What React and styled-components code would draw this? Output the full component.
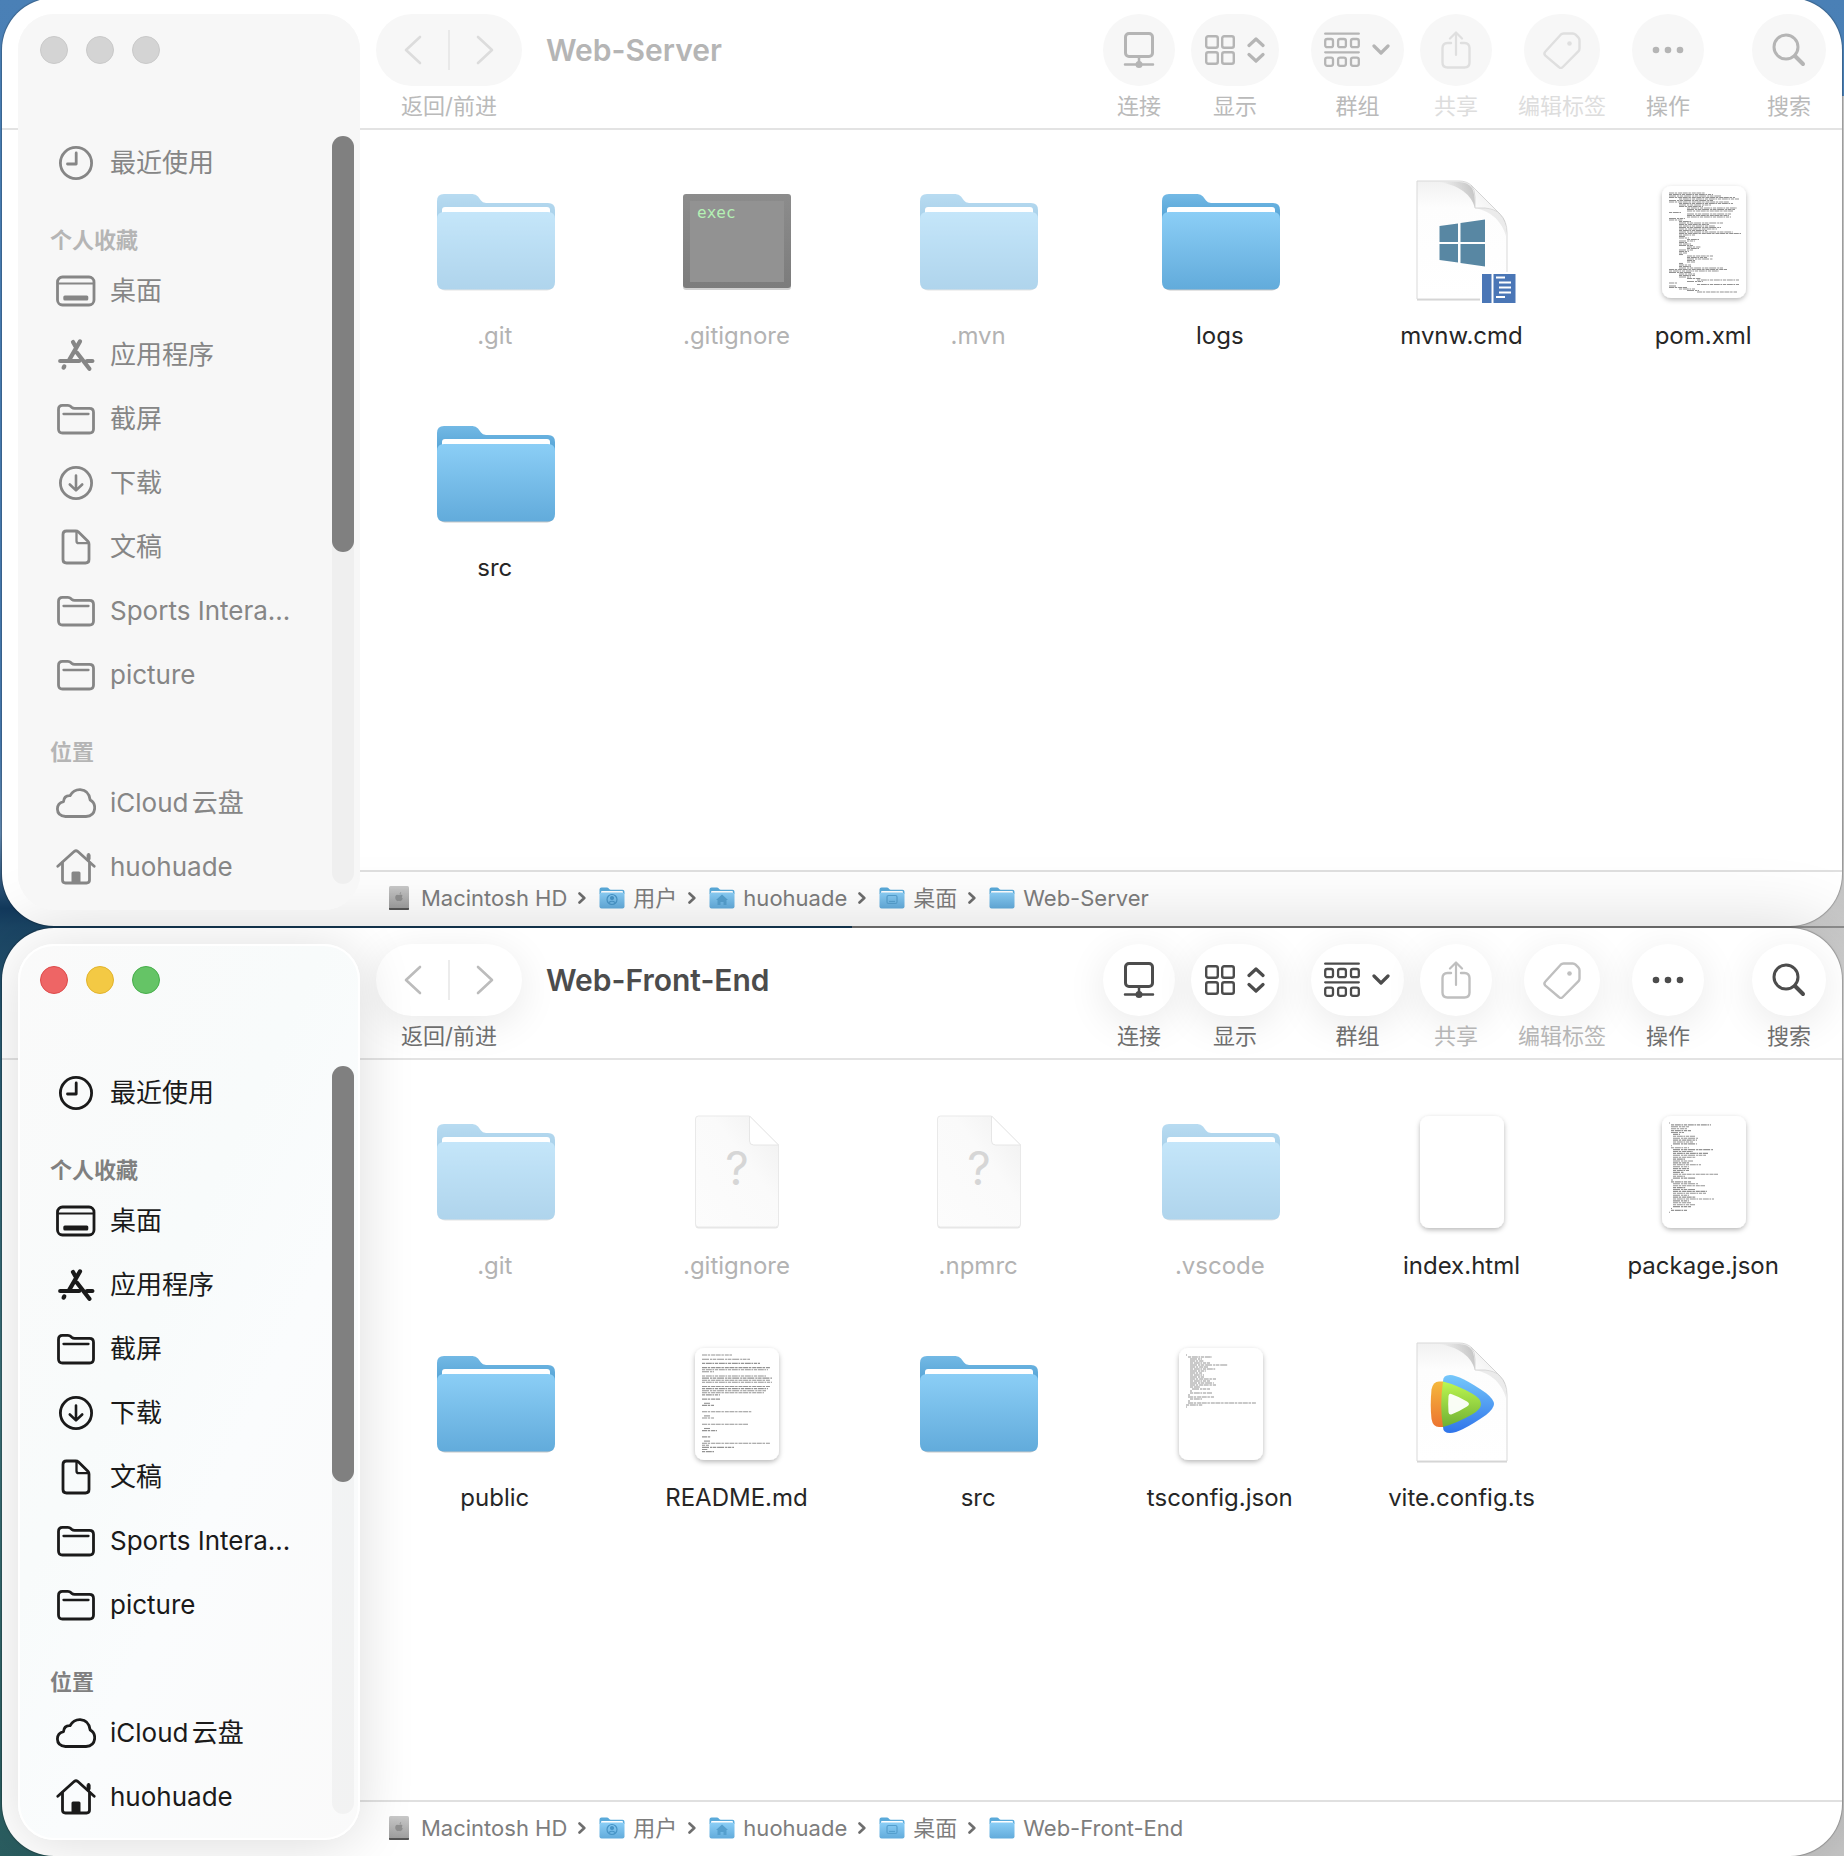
import React from "react";
import styled, { createGlobalStyle, ThemeProvider } from "styled-components";

const activeTheme = {
  title: "#4c4c4c",
  icon: "#4c4c4c",
  iconOff: "#bfbfbf",
  nav: "#bcbcbc",
  caption: "#6e6e6e",
  captionOff: "#b6b6b6",
  divider: "#ececec",
  pill: "#ffffff",
  pillShadow: "0 8px 40px rgba(0, 0, 0, 0.09)",
  side: "linear-gradient(115deg, #fafafa 0%, #f8fbfb 40%, #fafcfd 60%, #fafafa 100%)",
  sideEdge: "#ffffff",
  sideShadow: "0 4px 56px rgba(0, 0, 0, 0.14)",
  sideText: "#1a1a1a",
  section: "#808080",
  windowShadow: "0 0 76px rgba(0, 0, 0, 0.16)",
  lights: [
    ["#ee6565", "#dd4a4a"],
    ["#f3c944", "#e2b32c"],
    ["#65c466", "#46ae4a"],
  ],
};

const idleTheme = {
  title: "#b5b5b5",
  icon: "#b5b5b5",
  iconOff: "#dfdfdf",
  nav: "#dcdcdc",
  caption: "#bababa",
  captionOff: "#dddddd",
  divider: "#e9e9e9",
  pill: "#f7f7f7",
  pillShadow: "none",
  side: "#f7f7f7",
  sideEdge: "#f7f7f7",
  sideShadow: "0 0 0 rgba(0, 0, 0, 0)",
  sideText: "#868686",
  section: "#b5b5b5",
  windowShadow: "0 0 0 rgba(0, 0, 0, 0)",
  lights: [
    ["#d4d4d4", "#c9c9c9"],
    ["#d4d4d4", "#c9c9c9"],
    ["#d4d4d4", "#c9c9c9"],
  ],
};

const GlobalStyle = createGlobalStyle`
  *, *::before, *::after { box-sizing: border-box; }
  html, body { margin: 0; overflow: hidden; }
  body {
    font-family: Inter, "Noto Sans CJK SC", sans-serif;
    text-autospace: normal;
    background: #2a5a78;
  }
  button { font: inherit; color: inherit; background: none; border: 0; padding: 0; margin: 0; }
  a { color: inherit; text-decoration: none; }
  ul, ol { list-style: none; margin: 0; padding: 0; }
  svg { display: block; flex: none; }
`;

const Desktop = styled.div`
  min-height: calc(100vh + 2px);
  margin-top: -2px;
  padding: 0 2px;
  display: grid;
  grid-template-rows: 1fr 1fr;
  gap: 2px;
  background:
    linear-gradient(#8e8e8e, #8e8e8e) 852px 928px / 100% 2px no-repeat,
    linear-gradient(#c4c4c4 0, #bcbcbc 40%, #dedede 50%, #c0c0c0 60%, #c8c8c8) 100% 98px / 140px 100% no-repeat,
    linear-gradient(#4a80b6 0, #4577ab 40%, #5f86ad 45%, #12395c 49%, #1b4666 50%, #2c6078 56%, #40767e 75%, #2b5f62 100%);
`;

const WindowFrame = styled.section`
  display: grid;
  grid-template-columns: 358px minmax(0, 1fr);
  grid-template-rows: 132px minmax(0, 1fr) 56px;
  border-radius: 52px;
  overflow: hidden;
  background: #ffffff;
  box-shadow: 0 0 1px 1px rgba(0, 0, 0, 0.22), ${(p) => p.theme.windowShadow};
`;

const Toolbar = styled.header`
  grid-column: 1 / -1;
  grid-row: 1;
  padding: 16px 16px 0 374px;
  display: flex;
  align-items: flex-start;
  border-bottom: 2px solid #e3e3e3;
`;

const Column = styled.div`
  display: flex;
  flex-direction: column;
  align-items: center;
  gap: 6px;
`;

const NavPill = styled.div`
  display: flex;
  align-items: center;
  width: 146px;
  height: 72px;
  border-radius: 36px;
  color: ${(p) => p.theme.nav};
  background: ${(p) => p.theme.pill};
  box-shadow: ${(p) => p.theme.pillShadow};
`;

const NavButton = styled.button`
  flex: 1;
  height: 72px;
  display: grid;
  place-items: center;
`;

const NavDivider = styled.span`
  width: 2px;
  height: 40px;
  background: ${(p) => p.theme.divider};
`;

const Caption = styled.span`
  font-size: 22px;
  line-height: 28px;
  white-space: nowrap;
  color: ${(p) => (p.$off ? p.theme.captionOff : p.theme.caption)};
`;

const Title = styled.h1`
  flex: 1;
  min-width: 0;
  margin: 0 0 0 24px;
  font-size: 30px;
  line-height: 72px;
  font-weight: 600;
  white-space: nowrap;
  color: ${(p) => p.theme.title};
`;

const Tool = styled.button`
  display: flex;
  flex-direction: column;
  align-items: center;
  gap: 6px;
  margin-left: ${(p) => p.$before}px;
  color: ${(p) => (p.disabled ? p.theme.iconOff : p.theme.icon)};
`;

const Pill = styled.span`
  display: flex;
  align-items: center;
  justify-content: center;
  gap: 12px;
  width: ${(p) => p.$width}px;
  height: 72px;
  border-radius: 36px;
  background: ${(p) => p.theme.pill};
  box-shadow: ${(p) => p.theme.pillShadow};
`;

const Sidebar = styled.aside`
  grid-column: 1;
  grid-row: 1 / -1;
  z-index: 1;
  margin: 16px 0 16px 16px;
  border-radius: 36px;
  display: flex;
  flex-direction: column;
  background: ${(p) => p.theme.side};
  box-shadow: inset 0 0 0 2px ${(p) => p.theme.sideEdge}, ${(p) => p.theme.sideShadow};
`;

const Lights = styled.div`
  height: 117px;
  padding: 22px;
  display: flex;
  gap: 18px;
`;

const Light = styled.button`
  width: 28px;
  height: 28px;
  border-radius: 50%;
  background: ${(p) => p.$fill};
  border: 1px solid ${(p) => p.$edge};
`;

const SideBody = styled.div`
  flex: 1;
  min-height: 0;
  display: flex;
`;

const SideList = styled.nav`
  flex: 1;
  min-width: 0;
`;

const SectionName = styled.h2`
  margin: 0;
  padding: 31px 0 5px 32px;
  font-size: 22px;
  line-height: 28px;
  font-weight: 700;
  color: ${(p) => p.theme.section};
`;

const SideLink = styled.a`
  height: 64px;
  padding-left: 38px;
  display: flex;
  align-items: center;
  gap: 14px;
  font-size: 26px;
  line-height: 30px;
  white-space: nowrap;
  color: ${(p) => p.theme.sideText};
`;

const ScrollTrack = styled.div`
  width: 22px;
  margin: 5px 6px 26px 0;
  border-radius: 11px;
  background: rgba(0, 0, 0, 0.03);
`;

const ScrollThumb = styled.div`
  height: 416px;
  border-radius: 11px;
  background: #808080;
`;

const FileGrid = styled.main`
  grid-column: 2;
  grid-row: 2;
  padding: 47px 18px 0 14px;
  display: grid;
  grid-template-columns: repeat(6, minmax(0, 1fr));
  align-content: start;
  row-gap: 58px;
`;

const Tile = styled.button`
  display: flex;
  flex-direction: column;
  align-items: center;
  gap: 16px;
  font-size: 24px;
  line-height: 30px;
  color: ${(p) => (p.$dim ? "#b3b3b3" : "#262626")};
`;

const PathBar = styled.nav`
  grid-column: 2;
  grid-row: 3;
  border-top: 2px solid #e0e0e0;
  padding: 0 0 2px 27px;
  display: flex;
  align-items: center;
`;

const PathList = styled.ol`
  display: flex;
  align-items: center;
`;

const PathItem = styled.li`
  display: flex;
  align-items: center;
  color: #7d7d7d;
  font-size: 22px;
  line-height: 28px;
  white-space: nowrap;
`;

const PathLink = styled.a`
  display: flex;
  align-items: center;
  gap: 8px;
`;

const PathArrow = styled.svg`
  margin: 0 13px 0 11px;
`;

/* ---------- line icons ---------- */

const Line = ({ w = 40, h = 40, sw = 3, children }) => (
  <svg width={w} height={h} viewBox={`0 0 ${w} ${h}`} fill="none" stroke="currentColor"
    strokeWidth={sw} strokeLinecap="round" strokeLinejoin="round" aria-hidden="true">
    {children}
  </svg>
);

const sideIcons = {
  clock: (
    <Line sw={2.8}><circle cx="20" cy="20" r="15.6" /><path d="M20.2 10v11H11.5" /></Line>
  ),
  desktop: (
    <Line sw={2.8}>
      <rect x="1.5" y="6" width="36.5" height="28" rx="5" />
      <path d="M3 12.5h34" strokeWidth="2.2" />
      <rect x="7.3" y="24.5" width="25" height="5" rx="1.5" fill="currentColor" stroke="none" />
    </Line>
  ),
  apps: (
    <Line sw={4.2}>
      <path d="M17 7l2.8 5M24 6.4L13.4 24.6M21 17.8l12.4 16" />
      <path d="M4.200 26h19M31 26h5.400M7.600 32.600l.7-1.200" />
    </Line>
  ),
  folder: (
    <Line sw={2.8}>
      <path d="M2.500 10.500Q2.500 6.400 6.500 6.400h5.400q1.800 0 3 1.200l.8.7q1.200 1 3 1H33.500q4 0 4 4V30q0 4-4 4h-27q-4 0-4-4z" />
      <path d="M7.500 15h25" strokeWidth="2.3" />
    </Line>
  ),
  download: (
    <Line sw={2.8}>
      <circle cx="20" cy="20" r="15.6" />
      <path d="M20 12.500v14.500M13.800 21.500L20 27.400l6.200-5.900" strokeWidth="2.6" />
    </Line>
  ),
  doc: (
    <Line sw={2.8}>
      <path d="M10.500 4h9.200q1.600 0 2.800 1.100l9.400 9.100q1.100 1.100 1.100 2.700V32.500q0 3.500-3.500 3.500h-19Q7 36 7 32.500V7.500Q7 4 10.500 4z" />
      <path d="M20.500 4.500v9.500q0 2.200 2.200 2.200h9.800" strokeWidth="2.3" />
    </Line>
  ),
  cloud: (
    <Line sw={2.8}>
      <path d="M9.500 33.500Q1.500 33 1.400 26.100q.1-6 6.100-7.400Q8 12.500 14 12.700q3.600-6.300 10.200-6.100 8.800.6 10 10.400 4.600 2.400 4.500 8-.4 8-8.700 8.500z" />
    </Line>
  ),
  home: (
    <Line sw={2.8}>
      <path d="M1.800 19.200L18.400 4.300q1.600-1.200 3.200 0l16.600 14.900" />
      <path d="M6.500 16v17q0 3 3 3h21q3 0 3-3V16M32.600 13V7.500" />
      <path d="M32.600 7.500v5" strokeWidth="4" strokeLinecap="butt" />
      <path d="M15.500 35V26q0-1.500 1.500-1.500h6q1.500 0 1.500 1.500v9z" fill="currentColor" stroke="none" />
    </Line>
  ),
};

const toolIcons = {
  connect: (
    <Line w={32} h={36} sw={3}>
      <rect x="2.5" y="1.5" width="27" height="23" rx="3.5" />
      <path d="M16 25v6M2 32.500h28" strokeWidth="2.5" />
      <circle cx="16" cy="32.5" r="3.5" fill="currentColor" stroke="none" />
    </Line>
  ),
  view: (
    <>
      <Line w={30} h={32} sw={2.4}>
        <rect x="1.2" y="2.2" width="11.6" height="11.6" rx="2" />
        <rect x="17.2" y="2.2" width="11.6" height="11.6" rx="2" />
        <rect x="1.2" y="18.2" width="11.6" height="11.6" rx="2" />
        <rect x="17.2" y="18.2" width="11.6" height="11.6" rx="2" />
      </Line>
      <Line w={18} h={28} sw={3.2}><path d="M2 9.500L9 3l7 6.500M2 18.500L9 25l7-6.500" /></Line>
    </>
  ),
  group: (
    <>
      <Line w={36} h={36} sw={2.3}>
        <path d="M1.200 1.700h33.600M1.200 20.300h33.600" />
        <rect x="1.2" y="7" width="7.8" height="8.2" rx="2" />
        <rect x="14.1" y="7" width="7.8" height="8.2" rx="2" />
        <rect x="27" y="7" width="7.8" height="8.2" rx="2" />
        <rect x="1.2" y="25.6" width="7.8" height="8.2" rx="2" />
        <rect x="14.1" y="25.6" width="7.8" height="8.2" rx="2" />
        <rect x="27" y="25.6" width="7.8" height="8.2" rx="2" />
      </Line>
      <Line w={18} h={12} sw={3.2}><path d="M2 2l7 7 7-7" /></Line>
    </>
  ),
  share: (
    <Line w={30} h={38} sw={2.4}>
      <path d="M10 12H6.500Q1.500 12 1.500 17v14.500q0 5 5 5h17q5 0 5-5V17q0-5-5-5H20" />
      <path d="M15 24V1.800M9 7.500l6-6 6 6" strokeWidth="2.2" />
    </Line>
  ),
  tag: (
    <Line w={38} h={38} sw={2.4}>
      <path d="M20.500 2.500h9.200q1.700 0 2.900 1.200l2.700 2.700q1.200 1.200 1.200 2.900v8.200q0 1.700-1.200 2.900L19.800 36q-2 2-4 0L2.400 24.600q-2-2 0-4.100L17.700 3.700q1.200-1.200 2.800-1.200z" />
      <circle cx="26.5" cy="12.5" r="2.3" fill="currentColor" stroke="none" />
    </Line>
  ),
  more: (
    <svg width="32" height="8" viewBox="0 0 32 8" fill="currentColor" aria-hidden="true">
      <circle cx="4" cy="4" r="3.3" /><circle cx="16" cy="4" r="3.3" /><circle cx="28" cy="4" r="3.3" />
    </svg>
  ),
  search: (
    <Line w={34} h={34} sw={3}>
      <circle cx="14" cy="14" r="12" /><path d="M23 23l8 8" strokeWidth="4" />
    </Line>
  ),
};

/* ---------- file artwork ---------- */

const Art = ({ children, opacity }) => (
  <svg width="128" height="128" viewBox="0 0 128 128" opacity={opacity} aria-hidden="true">{children}</svg>
);

const Folder = ({ dim }) => (
  <Art opacity={dim ? 0.5 : 1}>
    <g transform="translate(6 17)">
      <rect x="1" y="60" width="116" height="36.5" rx="7" fill="#000" opacity=".22" />
      <path d="M0 20V7Q0 0 7 0h28.500q3.500 0 5.500 2.600l3 4Q45.500 9 49 9h62q7 0 7 7v14H0z" fill="url(#folderBack)" />
      <path d="M5 16q0-3 3-3h102q3 0 3 3v8H5z" fill="#fff" />
      <path d="M0 25q0-7 7-7h104q7 0 7 7v63q0 7.500-7 7.500H7q-7 0-7-7.500z" fill="url(#folderFront)" />
    </g>
  </Art>
);

const Exec = () => (
  <Art>
    <g transform="translate(11 17)">
      <rect x="0" y="3" width="108" height="93" rx="3" fill="#000" opacity=".18" />
      <rect width="108" height="94" rx="3" fill="url(#execEdge)" />
      <rect x="7" y="7" width="94" height="81" fill="#929292" />
      <text x="14" y="24" fontFamily="DejaVu Sans Mono, monospace" fontSize="16" fill="#b4f0b4">exec</text>
    </g>
  </Art>
);

const CurledPage = ({ children }) => (
  <Art>
    <g transform="translate(20 4)">
      <path d="M0 1H42Q50 1 55 6L83 34Q90 41 90 53V119.500H0z" fill="#000" opacity=".18" />
      <path d="M0 0H42Q50 0 55 5L83 33Q90 40 90 52V118H0z" fill="url(#pageFill)" stroke="#d9d9d9" />
      <path d="M22 1h20q9 0 13 6 3 5 3 20Q52 6 22 1z" fill="url(#curlShade)" />
      <path d="M58 27h10q10 1 17 8 5 6 4 20Q82 32 58 27z" fill="#000" opacity=".07" />
      <path d="M54 4q4 5 4 12v11h10q10 1 15 6z" fill="url(#curl)" stroke="#cfcfcf" strokeWidth=".8" />
      {children}
    </g>
  </Art>
);

const WindowsCmd = () => (
  <CurledPage>
    <path fill="#5887a3" d="M22.500 45L41 42.500V61H22.500zM43.500 42L68 38.500V61H43.500zM22.500 63H41v18.500L22.500 79zM43.500 63H68v22.500L43.500 82z" />
    <rect x="63" y="91" width="38" height="33" fill="#fff" />
    <path fill="#4a76b6" d="M65 93h9.500v29H65zM76.500 93h22v29h-22z" />
    <path stroke="#fff" strokeWidth="2.2" d="M79 96.500h9M82 101.500h12M82 106.500h12M82 111.500h12M79 116h9" />
  </CurledPage>
);

const VideoTs = () => (
  <CurledPage>
    <path d="M26 38q0-6 7-6 10 0 36 18 8 6.500 8 11t-8 11Q43 90 33 90q-7 0-7-6z" fill="url(#playBlue)" />
    <path d="M22 38.500h4V84h-4q-6 0-7.500-8-1.500-14 0-29.500 1.500-8 7.500-8z" fill="url(#playOrange)" />
    <path d="M26 38.500Q40 42 55 50.500q9 5 9 10.500t-9 10.500Q40 80 26 84q-3.500-22 0-45.500z" fill="url(#playGreen)" />
    <path d="M31.500 53q.4-3 3.400-1.800Q43 54 50 58.500q4 2.500 0 5Q43 68 34.900 71.200q-3 1-3.400-2-.6-8 0-16.200z" fill="#fff" opacity=".95" />
  </CurledPage>
);

const UnknownPage = () => (
  <Art>
    <g transform="translate(23.500 9)">
      <path d="M3 1.500h51l29 28V109q0 3.500-3 3.500H3q-3 0-3-3z" fill="#000" opacity=".1" />
      <path d="M3 0h51l29 29v79q0 3-3 3H3q-3 0-3-3V3Q0 0 3 0z" fill="url(#unknownFill)" stroke="#e9e9e9" />
      <path d="M54 0v25q0 4 4 4h25z" fill="#fff" stroke="#e6e6e6" />
      <text x="41.5" y="69" textAnchor="middle" fontFamily="Inter, sans-serif" fontSize="46" fontWeight="400" fill="#d6d6d6">?</text>
    </g>
  </Art>
);

/* Each entry is an indent and a length; a zero length leaves the row blank. */
const previews = {
  pom: [[0,36],[0,44],[0,52],[0,66],[10,60],[0,44],[0,60],[10,54],[10,32],[10,24],[18,50],[18,48],[18,46],[0,12],[18,44],[18,42],[18,44],[0,16],[0,14],[10,12],[10,44],[10,30],[10,36],[10,42],[10,38],[10,28],[10,54],[10,62],[10,16],[10,6],[10,10],[18,12],[10,16],[10,8],[10,12],[10,14],[18,14],[18,12],[10,14],[10,10],[10,8],[10,4],[18,26],[18,20],[18,26],[18,8],[18,8],[10,4],[10,12],[10,12],[10,44],[0,58],[0,50],[0,22],[10,16],[10,16],[10,12],[18,14],[28,42],[18,16],[0,8],[28,42],[0,8],[0,18],[10,16],[18,12],[28,40]],
  pkg: [[0,1],[2,40],[2,18],[2,16],[2,20],[2,13],[4,7],[4,22],[4,25],[4,24],[4,20],[4,24],[2,1],[2,18],[4,40],[4,20],[4,35],[4,33],[4,23],[4,12],[4,20],[4,16],[4,28],[4,16],[4,16],[4,16],[4,11],[4,45],[4,12],[4,23],[2,2],[2,20],[4,25],[4,32],[4,13],[4,22],[4,34],[4,33],[4,16],[4,23],[4,41],[4,16],[4,18],[4,22],[4,18],[2,1],[2,16],[0,1]],
  readme: [[0,30],[0,0],[0,48],[0,0],[0,58],[0,0],[0,68],[0,66],[0,12],[0,0],[0,64],[0,70],[0,68],[0,70],[0,0],[0,68],[0,66],[0,64],[0,62],[0,18],[0,0],[0,18],[0,0],[2,6],[0,12],[0,0],[0,0],[0,50],[0,0],[2,6],[0,12],[0,0],[0,0],[0,46],[0,0],[2,6],[0,15],[0,0],[0,0],[0,9],[0,0],[2,6],[0,68],[0,7],[0,32],[0,6],[0,12]],
  tsconfig: [[0,1],[2,24],[4,12],[4,14],[4,20],[4,38],[4,18],[4,26],[4,16],[4,12],[4,14],[4,14],[4,26],[4,20],[4,24],[4,26],[4,10],[6,18],[4,2],[4,22],[2,2],[2,26],[4,12],[2,2],[2,68],[0,17],[0,1]],
  blank: [],
};

const dashes = ["5 .7 2.5 .9 4 .6", "3 .8 6 .6 1.8 .8", "7 1 2.2 .6 3.5 .8"];

const PreviewPage = ({ rows, pitch }) => (
  <Art>
    <g transform="translate(23 9)">
      <rect width="84" height="112" rx="9" fill="#fff" filter="url(#pageShadow)" />
      {rows.map(([indent, length], i) =>
        length > 0 ? (
          <path key={i} d={`M${7 + indent} ${7 + i * pitch}h${length}`} stroke="#3c3c3c" strokeWidth="1.1"
            opacity=".55" strokeDasharray={dashes[i % 3]} />
        ) : null
      )}
    </g>
  </Art>
);

const art = {
  folder: <Folder />,
  folderDim: <Folder dim />,
  exec: <Exec />,
  cmd: <WindowsCmd />,
  video: <VideoTs />,
  unknown: <UnknownPage />,
  pom: <PreviewPage rows={previews.pom} pitch={1.5} />,
  pkg: <PreviewPage rows={previews.pkg} pitch={1.9} />,
  readme: <PreviewPage rows={previews.readme} pitch={2.1} />,
  tsconfig: <PreviewPage rows={previews.tsconfig} pitch={2} />,
  blank: <PreviewPage rows={previews.blank} pitch={2} />,
};

const Shade = ({ id, stops, diagonal }) => (
  <linearGradient id={id} x1="0" y1={diagonal ? "1" : "0"} x2={diagonal ? "1" : "0"} y2={diagonal ? "0" : "1"}>
    {stops.map(([offset, color]) => <stop key={offset} offset={offset} stopColor={color} />)}
  </linearGradient>
);

const DefsHolder = styled.svg`
  position: absolute;
`;

const ArtDefs = () => (
  <DefsHolder width="0" height="0" aria-hidden="true">
    <defs>
      <Shade id="folderBack" stops={[[0, "#73b9e5"], [1, "#4f9fd2"]]} />
      <Shade id="folderFront" stops={[[0, "#8bcef6"], [1, "#62abdb"]]} />
      <Shade id="execEdge" stops={[[0, "#8c8c8c"], [1, "#7c7c7c"]]} />
      <Shade id="pageFill" stops={[[0, "#f1f1f1"], [0.22, "#fdfdfd"], [1, "#ffffff"]]} />
      <Shade id="curl" diagonal stops={[[0, "#ffffff"], [0.5, "#f4f4f4"], [1, "#e2e2e2"]]} />
      <linearGradient id="curlShade" x1="0" y1="0" x2="1" y2="0">
        <stop offset="0" stopColor="#000" stopOpacity="0" />
        <stop offset="1" stopColor="#000" stopOpacity=".2" />
      </linearGradient>
      <Shade id="unknownFill" diagonal stops={[[0, "#fcfcfc"], [0.6, "#fafafa"], [1, "#efefef"]]} />
      <Shade id="playBlue" stops={[[0, "#76c8fb"], [1, "#2f74ea"]]} />
      <Shade id="playOrange" stops={[[0, "#f5b83c"], [1, "#ec7430"]]} />
      <Shade id="playGreen" stops={[[0, "#bdf751"], [1, "#6fb033"]]} />
      <Shade id="drive" stops={[[0, "#c9c9c9"], [1, "#9a9a9a"]]} />
      <filter id="pageShadow" x="-20%" y="-20%" width="140%" height="140%">
        <feDropShadow dx="0" dy="2" stdDeviation="2.5" floodColor="#000" floodOpacity=".28" />
      </filter>
    </defs>
  </DefsHolder>
);

/* ---------- path bar artwork ---------- */

const Drive = () => (
  <svg width="26" height="24" viewBox="0 0 26 24" aria-hidden="true">
    <rect x="2" width="20" height="24" rx="1.5" fill="url(#drive)" />
    <path d="M2 22h20v1q0 1-1 1H3q-1 0-1-1z" fill="#555" />
    <path d="M12.500 8.200q.2-1.800 1.700-2.200 0 1.700-1.700 2.200zM12 9q2-1 3.500.4-1.600 1.700.3 3.400-1.600 3.200-3.800 2-2.200 1.200-3.600-1.800Q7.600 9.400 10 8.700z" fill="#8f8f8f" />
  </svg>
);

const marks = {
  none: null,
  user: (
    <g fill="none" stroke="#4794c6" strokeWidth="1.2">
      <circle cx="13" cy="13.5" r="5" /><circle cx="13" cy="12" r="1.5" fill="#4794c6" /><path d="M10 16.500q3-2.500 6 0" />
    </g>
  ),
  home: <path d="M7 14l6-5.500 6 5.500h-1.500v5h-3v-3h-3v3h-3v-5z" fill="#559fce" />,
  desk: (
    <g fill="none" stroke="#559fce" strokeWidth="1.2">
      <rect x="8" y="9.5" width="10" height="8" rx="1.5" /><path d="M10 15.500h6" />
    </g>
  ),
};

const SmallFolder = ({ mark = "none" }) => (
  <svg width="26" height="24" viewBox="0 0 26 24" aria-hidden="true">
    <path d="M.5 8V3.500Q.5 1.500 2.500 1.500H8q1 0 1.600.8l.6.7q.6.700 1.600.7h11.700q2 0 2 2V8z" fill="#5aaada" />
    <path d="M2 6q0-1 1-1h20q1 0 1 1v3H2z" fill="#fff" />
    <path d="M.5 8.500Q.5 6.500 2.500 6.500h21q2 0 2 2v12q0 2-2 2h-21q-2 0-2-2z" fill="url(#folderFront)" />
    {marks[mark]}
  </svg>
);

/* ---------- data ---------- */

const sections = [
  { items: [["clock", "最近使用"]] },
  {
    name: "个人收藏",
    items: [
      ["desktop", "桌面"],
      ["apps", "应用程序"],
      ["folder", "截屏"],
      ["download", "下载"],
      ["doc", "文稿"],
      ["folder", "Sports Intera..."],
      ["folder", "picture"],
    ],
  },
  { name: "位置", items: [["cloud", "iCloud云盘"], ["home", "huohuade"]] },
];

const tools = [
  { icon: "connect", label: "连接", width: 72, before: 0 },
  { icon: "view", label: "显示", width: 88, before: 16 },
  { icon: "group", label: "群组", width: 93, before: 32 },
  { icon: "share", label: "共享", width: 72, before: 16, off: true },
  { icon: "tag", label: "编辑标签", width: 76, before: 26, off: true },
  { icon: "more", label: "操作", width: 72, before: 26 },
  { icon: "search", label: "搜索", width: 74, before: 48 },
];

const serverFiles = [
  ["folderDim", ".git", true],
  ["exec", ".gitignore", true],
  ["folderDim", ".mvn", true],
  ["folder", "logs"],
  ["cmd", "mvnw.cmd"],
  ["pom", "pom.xml"],
  ["folder", "src"],
];

const frontFiles = [
  ["folderDim", ".git", true],
  ["unknown", ".gitignore", true],
  ["unknown", ".npmrc", true],
  ["folderDim", ".vscode", true],
  ["blank", "index.html"],
  ["pkg", "package.json"],
  ["folder", "public"],
  ["readme", "README.md"],
  ["folder", "src"],
  ["tsconfig", "tsconfig.json"],
  ["video", "vite.config.ts"],
];

const lightNames = ["关闭", "最小化", "缩放"];

function FinderWindow({ title, files, theme }) {
  const path = [
    [<Drive />, "Macintosh HD"],
    [<SmallFolder mark="user" />, "用户"],
    [<SmallFolder mark="home" />, "huohuade"],
    [<SmallFolder mark="desk" />, "桌面"],
    [<SmallFolder />, title],
  ];
  return (
    <ThemeProvider theme={theme}>
      <WindowFrame aria-label={title}>
        <Toolbar>
          <Column>
            <NavPill>
              <NavButton type="button" aria-label="返回">
                <Line w={20} h={32} sw={2.6}><path d="M18 3L4 16l14 13" /></Line>
              </NavButton>
              <NavDivider />
              <NavButton type="button" aria-label="前进">
                <Line w={20} h={32} sw={2.6}><path d="M2 3l14 13L2 29" /></Line>
              </NavButton>
            </NavPill>
            <Caption>返回/前进</Caption>
          </Column>
          <Title>{title}</Title>
          {tools.map((t) => (
            <Tool key={t.icon} type="button" $before={t.before} disabled={t.off}>
              <Pill $width={t.width}>{toolIcons[t.icon]}</Pill>
              <Caption $off={t.off}>{t.label}</Caption>
            </Tool>
          ))}
        </Toolbar>
        <Sidebar>
          <Lights>
            {theme.lights.map(([fill, edge], i) => (
              <Light key={lightNames[i]} type="button" aria-label={lightNames[i]} $fill={fill} $edge={edge} />
            ))}
          </Lights>
          <SideBody>
            <SideList>
              {sections.map((section, i) => (
                <React.Fragment key={i}>
                  {section.name && <SectionName>{section.name}</SectionName>}
                  <ul>
                    {section.items.map(([icon, label]) => (
                      <li key={label}>
                        <SideLink href="#">{sideIcons[icon]}{label}</SideLink>
                      </li>
                    ))}
                  </ul>
                </React.Fragment>
              ))}
            </SideList>
            <ScrollTrack><ScrollThumb /></ScrollTrack>
          </SideBody>
        </Sidebar>
        <FileGrid>
          {files.map(([kind, name, dim]) => (
            <Tile key={name} type="button" $dim={dim}>
              {art[kind]}
              <span>{name}</span>
            </Tile>
          ))}
        </FileGrid>
        <PathBar>
          <PathList>
            {path.map(([icon, label], i) => (
              <PathItem key={label}>
                <PathLink href="#">{icon}{label}</PathLink>
                {i < path.length - 1 && (
                  <PathArrow width="8" height="14" viewBox="0 0 8 14" fill="none" stroke="#6e6e6e" strokeWidth="2.6"
                    strokeLinecap="round" strokeLinejoin="round" aria-hidden="true">
                    <path d="M1.500 2.500L6.300 7l-4.800 4.500" />
                  </PathArrow>
                )}
              </PathItem>
            ))}
          </PathList>
        </PathBar>
      </WindowFrame>
    </ThemeProvider>
  );
}

export default function App() {
  return (
    <>
      <GlobalStyle />
      <ArtDefs />
      <Desktop>
        <FinderWindow title="Web-Server" files={serverFiles} theme={idleTheme} />
        <FinderWindow title="Web-Front-End" files={frontFiles} theme={activeTheme} />
      </Desktop>
    </>
  );
}
